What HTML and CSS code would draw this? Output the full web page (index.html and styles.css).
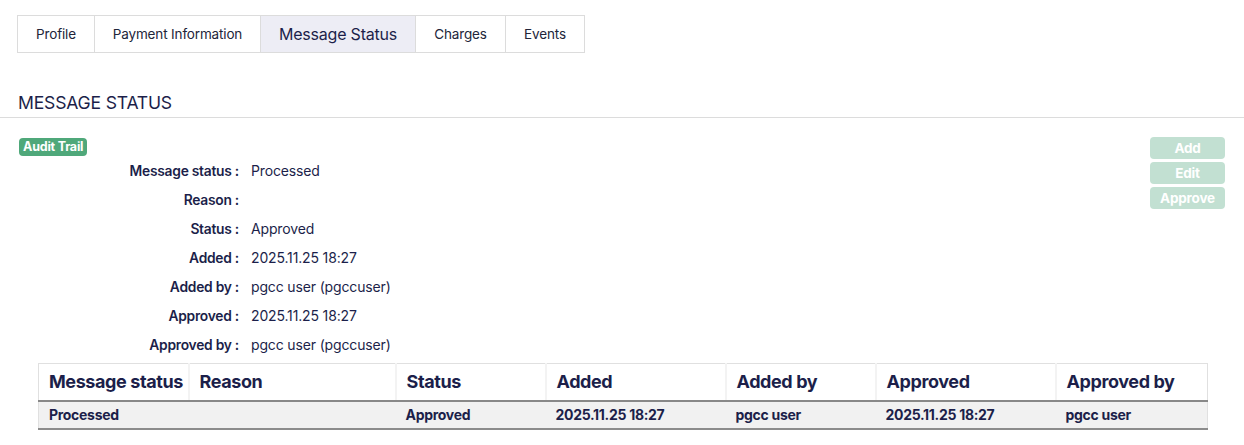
FILE: index.html
```html
<!DOCTYPE html>
<html>
<head>
<meta charset="utf-8">
<link rel="stylesheet" href="styles.css">
</head>
<body>
<div class="page">
  <nav class="tabs">
    <div class="tab t-profile">Profile</div>
    <div class="tab t-payment">Payment Information</div>
    <div class="tab t-msg active">Message Status</div>
    <div class="tab t-charges">Charges</div>
    <div class="tab t-events">Events</div>
  </nav>

  <h2 class="section-title">MESSAGE STATUS</h2>

  <div class="content">
    <div class="top">
      <div class="left">
        <span class="badge">Audit Trail</span>
        <dl class="details">
          <div class="row"><dt>Message status :</dt><dd>Processed</dd></div>
          <div class="row"><dt>Reason :</dt><dd></dd></div>
          <div class="row"><dt>Status :</dt><dd>Approved</dd></div>
          <div class="row"><dt>Added :</dt><dd>2025.11.25 18:27</dd></div>
          <div class="row"><dt>Added by :</dt><dd>pgcc user (pgccuser)</dd></div>
          <div class="row"><dt>Approved :</dt><dd>2025.11.25 18:27</dd></div>
          <div class="row"><dt>Approved by :</dt><dd>pgcc user (pgccuser)</dd></div>
        </dl>
      </div>
      <div class="actions">
        <button class="btn">Add</button>
        <button class="btn">Edit</button>
        <button class="btn">Approve</button>
      </div>
    </div>

    <table class="grid">
      <colgroup>
        <col class="c1"><col class="c2"><col class="c3"><col class="c4"><col class="c5"><col class="c6"><col class="c7">
      </colgroup>
      <thead>
        <tr>
          <th>Message status</th><th>Reason</th><th>Status</th><th>Added</th><th>Added by</th><th>Approved</th><th>Approved by</th>
        </tr>
      </thead>
      <tbody>
        <tr>
          <td>Processed</td><td></td><td>Approved</td><td>2025.11.25 18:27</td><td>pgcc user</td><td>2025.11.25 18:27</td><td>pgcc user</td>
        </tr>
      </tbody>
    </table>
  </div>
</div>
</body>
</html>
```

FILE: styles.css
```css
* { box-sizing: border-box; }
html, body { margin: 0; padding: 0; background: #fff; }
body {
  font-family: Inter, "Noto Sans", sans-serif;
  color: #1c1f4a;
}
.page { padding-top: 15px; }

.tabs {
  display: flex;
  margin-left: 17px;
  width: 568px;
  height: 38px;
  border: 1px solid #dcdcdc;
}
.tab {
  display: flex;
  align-items: center;
  justify-content: center;
  font-size: 13.5px;
  color: #22253a;
  border-right: 1px solid #dcdcdc;
  letter-spacing: -0.15px;
}
.tab:last-child { border-right: none; }
.t-profile { width: 77px; }
.t-payment { width: 166px; }
.t-msg { width: 155px; }
.t-charges { width: 90px; }
.t-events { flex: 1; }
.tab.active {
  background: #ededf5;
  font-size: 16px;
  color: #1c1f4a;
  letter-spacing: -0.2px;
}

.section-title {
  margin: 39px 0 0 0;
  padding: 0 0 3px 18px;
  font-size: 17.6px;
  font-weight: 400;
  line-height: 22px;
  color: #1c1f4a;
  border-bottom: 1px solid #dcdcdc;
  letter-spacing: -0.2px;
}

.content { padding: 20px 37px 0 19px; }
.top { display: flex; justify-content: space-between; }
.left { display: flex; flex-direction: column; align-items: flex-start; }

.badge {
  display: inline-block;
  background: #4fa87a;
  color: #fff;
  font-size: 12.5px;
  font-weight: 700;
  line-height: 18px;
  height: 18px;
  padding: 0 4px;
  border-radius: 4px;
  letter-spacing: -0.2px;
}

.details { margin: 0; }
.row {
  display: flex;
  height: 29px;
  align-items: center;
  font-size: 14px;
}
.row dt {
  width: 220px;
  text-align: right;
  font-weight: 600;
  font-size: 13.8px;
  letter-spacing: -0.25px;
}
.row dd {
  margin: 0 0 0 12px;
  letter-spacing: -0.15px;
}

.actions {
  display: flex;
  flex-direction: column;
  gap: 3px;
  width: 75px;
  margin-top: -1px;
  margin-right: -18px;
}
.btn {
  height: 22px;
  border: none;
  border-radius: 4px;
  background: #c2e0d2;
  color: #fff;
  font-family: Inter, "Noto Sans", sans-serif;
  font-size: 13.5px;
  font-weight: 700;
  padding: 0;
  letter-spacing: -0.2px;
}

.grid {
  margin: 4px 0 0 19px;
  width: 1169px;
  border-collapse: collapse;
  table-layout: fixed;
  border: 1px solid #e0e0e0;
}
.c1 { width: 150px; }
.c2 { width: 207px; }
.c3 { width: 150px; }
.c4 { width: 180px; }
.c5 { width: 150px; }
.c6 { width: 180px; }
.c7 { width: 152px; }

.grid th {
  text-align: left;
  font-size: 18px;
  font-weight: 700;
  height: 37px;
  padding: 0 0 0 10px;
  border-left: 2px solid #f3f3f3;
  border-bottom: 2px solid #888;
  white-space: nowrap;
  letter-spacing: -0.4px;
  vertical-align: middle;
}
.grid th:first-child { border-left: none; }
.grid td {
  background: #f1f1f1;
  font-size: 14px;
  font-weight: 700;
  height: 28px;
  padding: 0 0 0 10px;
  border-bottom: 2px solid #8c8c8c;
  letter-spacing: -0.3px;
  white-space: nowrap;
}
```
